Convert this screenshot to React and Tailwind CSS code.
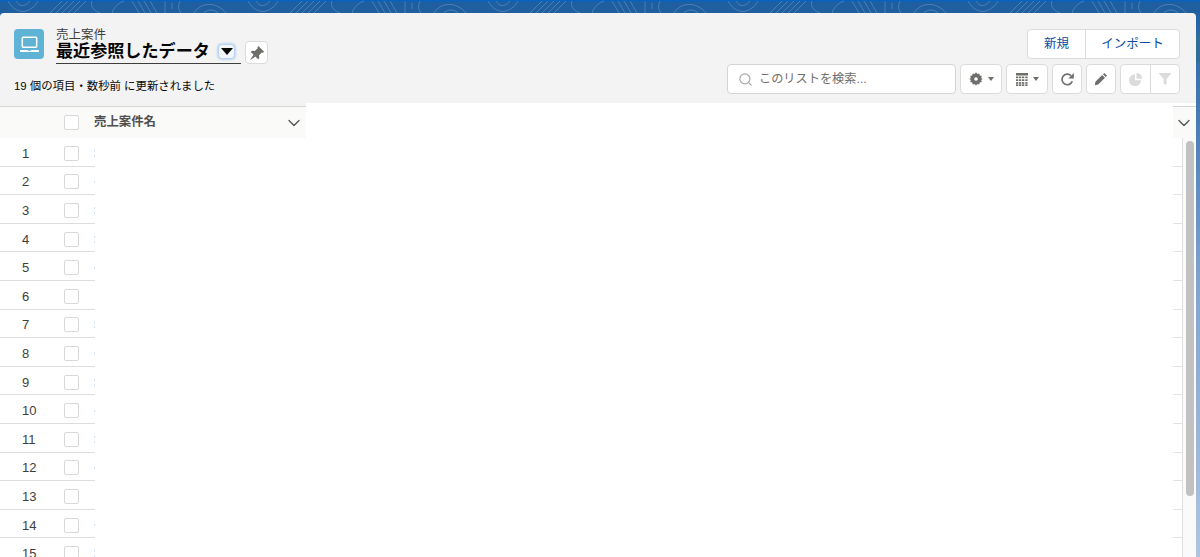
import React from "react";
import { Search, ChevronDown } from "lucide-react";

const font = '"Liberation Sans","Noto Sans CJK JP",sans-serif';
const marks = ["a","b","a","a","b","","a","b","a","b","a","b","","b","a"];

function Topo() {
  const motifs = [];
  for (let i = -1; i < 6; i++) {
    const o = i * 240;
    motifs.push(
      <g key={i} transform={`translate(${o} 0)`} fill="none" stroke="#ffffff" strokeOpacity="0.2" strokeWidth="1">
        <path d="M8 1C12 9 20 13 26 11C32 9 36 5 38 1" />
        <path d="M16 1C19 6 24 8 30 1" />
        <path d="M50 13L62 1M56 13L68 1M62 13L74 1M68 13L80 1M74 13L86 1" />
        <path d="M92 1C90 6 94 11 100 13M112 13C114 7 118 3 124 1" />
        <path d="M132 1L139 13M138 1L145 13M144 1L151 13M150 1L157 13" />
        <path d="M165 1V13M172 3V9M180 1C178 6 178 9 181 13" />
        <path d="M194 13C198 6 206 3 214 5C220 7 224 10 226 13" />
        <path d="M204 13C208 9 214 9 218 13" />
      </g>
    );
  }
  return (
    <svg width="1200" height="13" className="block" aria-hidden="true">
      {motifs}
    </svg>
  );
}

function Laptop() {
  return (
    <svg width="22" height="22" viewBox="0 0 22 22" fill="none" aria-hidden="true">
      <rect x="4.300" y="4.300" width="14.400" height="10" rx="1" stroke="#fff" strokeWidth="1.500" />
      <path d="M2 17h7.500l.6.700h2.800l.6-.7H21v1.200a.8.8 0 0 1-.8.8H2.800a.8.8 0 0 1-.8-.8z" fill="#fff" />
    </svg>
  );
}

function Pin() {
  return (
    <svg width="16" height="16" viewBox="0 0 14 14" fill="#706e6b" aria-hidden="true">
      <path d="M8.200.8l5 5-1 .9-.9-.2-2.500 2.500.2 2.500-1 1L1.600 6.100l1-1 2.500.2 2.500-2.500-.2-.9z" />
      <path d="M4 8.300l1.700 1.700L.8 13.400z" />
    </svg>
  );
}

function Gear() {
  return (
    <svg width="14" height="14" viewBox="0 0 14 14" aria-hidden="true">
      <path fillRule="evenodd" fill="#706e6b" d="M7 .3l1.300 1.700 2-.5.5 2 2 .6-.6 1.900L13.700 7l-1.500 1 .6 1.900-2 .6-.5 2-2-.5L7 13.700 5.700 12l-2 .5-.5-2-2-.6.6-1.900L.3 7l1.500-1-.6-1.900 2-.6.5-2 2 .5zM7 5.200a1.800 1.800 0 1 0 0 3.600 1.800 1.800 0 0 0 0-3.600z" />
    </svg>
  );
}

function TableIcon() {
  return (
    <svg width="12" height="13" viewBox="0 0 12 13" fill="#706e6b" aria-hidden="true">
      <rect x="0" y="0" width="12" height="2.500" />
      {[3.5, 6.3, 9.1, 11.3].map((y) =>
        [0, 3, 6, 9.3].map((x) => <rect key={`${x}-${y}`} x={x} y={y} width="2.300" height="1.700" />)
      )}
    </svg>
  );
}

function Refresh() {
  return (
    <svg width="15" height="15" viewBox="0 0 15 15" fill="none" aria-hidden="true">
      <path d="M12.300 9.300A5.300 5.300 0 1 1 11 3.600" stroke="#706e6b" strokeWidth="1.700" />
      <path d="M13.800 1v5.500H8.300z" fill="#706e6b" />
    </svg>
  );
}

function Pencil() {
  return (
    <svg width="14" height="14" viewBox="0 0 14 14" fill="#706e6b" aria-hidden="true">
      <path d="M10.300.9l2.800 2.800-1.400 1.400L8.900 2.300zM8.200 3l2.800 2.800-6.800 6.800-3.400.7.600-3.500z" />
    </svg>
  );
}

function PieIcon() {
  return (
    <svg width="14" height="14" viewBox="0 0 14 14" fill="#dddbda" aria-hidden="true">
      <path d="M6 2.200v6h6A6 6 0 1 1 6 2.200z" />
      <path d="M7.500.8a5.800 5.800 0 0 1 5.700 5.900H7.500z" />
    </svg>
  );
}

function Funnel() {
  return (
    <svg width="14" height="14" viewBox="0 0 14 14" fill="#dddbda" aria-hidden="true">
      <path d="M.5 1h13L8.500 7v6l-3-1.500V7z" />
    </svg>
  );
}

function Caret({ color = "#706e6b" }) {
  return <span className="ml-[5px] block h-0 w-0 border-x-[3.5px] border-t-[4px] border-x-transparent" style={{ borderTopColor: color }} />;
}

function Box() {
  return <span className="block h-[15px] w-[15px] rounded-[2px] border border-[#d8d8d8] bg-white" />;
}

function Tool({ w, children }) {
  return (
    <div className={`flex h-[30px] ${w} items-center justify-center rounded-[4px] border border-[#dddbda] bg-white`}>
      {children}
    </div>
  );
}

export default function App() {
  return (
    <div
      className="flex h-[557px] w-[1200px] flex-col overflow-hidden bg-gradient-to-b from-[#1b5fa3] via-[#7fa3cf] to-[#b0c4e0]"
      style={{ fontFamily: font }}
    >
      <div className="h-[13px] shrink-0 border-t-2 border-[#0b62b8] bg-[#1f5f9f]">
        <div className="-mt-[2px]"><Topo /></div>
      </div>
      <div className="flex min-h-0 flex-1">
        <div className="flex w-[1196px] min-h-0 flex-col overflow-hidden rounded-t-[4px] bg-[#f3f3f3]">
          {/* page header */}
          <div className="flex h-[90px] shrink-0 justify-between pl-[14px] pr-[16px] pt-[16px]">
            <div>
              <div className="flex h-[35px]">
                <div className="flex h-[30px] w-[30px] items-center justify-center rounded-[4px] bg-[#5fb4d6]">
                  <Laptop />
                </div>
                <div className="ml-[12px]">
                  <div className="h-[11px] pt-[1px] text-[12.5px] leading-[11px] text-[#3e3e3c]">売上案件</div>
                  <div className="flex items-start">
                    <div className="flex h-[24px] w-[185px] items-center border-b border-[#3e3e3c]">
                      <span className="w-[162px] text-[17.1px] font-bold leading-[22px] text-[#080707]">最近参照したデータ</span>
                      <span className="flex h-[15px] w-[17px] items-center justify-center rounded-[4px] border border-[#b9d4f3] bg-[#f3f6fa] shadow-[0_0_3px_#8ab8ee]">
                        <span className="block h-0 w-0 border-x-[6px] border-t-[7px] border-x-transparent border-t-[#080707]" />
                      </span>
                    </div>
                    <div className="ml-[4px] mt-[1px] flex h-[23px] w-[23px] items-center justify-center rounded-[4px] border border-[#dddbda] bg-white">
                      <Pin />
                    </div>
                  </div>
                </div>
              </div>
              <div className="mt-[14px] text-[11.4px] leading-[16px] text-[#080707]">19 個の項目・数秒前 に更新されました</div>
            </div>
            <div className="flex flex-col items-end">
              <div className="flex h-[30px] w-[153px] rounded-[4px] border border-[#dddbda] bg-white text-[12.5px] text-[#0b4a9e]">
                <div className="flex w-[58px] items-center justify-center border-r border-[#dddbda]">新規</div>
                <div className="flex flex-1 items-center justify-center">インポート</div>
              </div>
              <div className="mt-[5px] flex gap-[4px]">
                <div className="flex h-[30px] w-[229px] items-center rounded-[4px] border border-[#d4d4d4] bg-white pl-[10px]">
                  <Search size={15} color="#a8a8a8" strokeWidth={2} />
                  <span className="ml-[6px] text-[12.2px] text-[#706e6b]">このリストを検索...</span>
                </div>
                <Tool w="w-[42px]"><Gear /><Caret /></Tool>
                <Tool w="w-[42px]"><TableIcon /><Caret /></Tool>
                <Tool w="w-[30px]"><Refresh /></Tool>
                <Tool w="w-[30px]"><Pencil /></Tool>
                <div className="flex h-[30px] w-[60px] rounded-[4px] border border-[#dddbda] bg-white">
                  <div className="flex w-[30px] items-center justify-center border-r border-[#dddbda]"><PieIcon /></div>
                  <div className="flex flex-1 items-center justify-center"><Funnel /></div>
                </div>
              </div>
            </div>
          </div>

          {/* table */}
          <div className="flex min-h-0 flex-1">
            <div className="flex w-[306px] shrink-0 flex-col pt-[3px]">
              <div className="flex h-[32px] shrink-0 items-center border-t border-[#d6d6d6] bg-[#fafaf9]">
                <div className="flex w-[94px] justify-end pr-[15px]"><Box /></div>
                <span className="flex-1 text-[12.4px] font-bold text-[#514f4d]">売上案件名</span>
                <ChevronDown size={20} color="#555" strokeWidth={1.6} className="mr-[2px]" />
              </div>
              <div className="flex min-h-0 flex-1">
                <div className="w-[95px] shrink-0">
                  {marks.map((m, i) => (
                    <div key={i} className="flex h-[28.6px] items-center border-b border-[#dddddd] bg-white pt-[3px]">
                      <span className="ml-[22px] w-[42px] text-[13px] leading-none text-[#3e3e3c]">{i + 1}</span>
                      <Box />
                      <span className="ml-[15px] flex w-[1px] flex-col gap-[3px]">
                        {m && <span className="block h-[2px] w-[1px] bg-[#cfe0f7]" />}
                        {m === "a" && <span className="block h-[2px] w-[1px] bg-[#cfe0f7]" />}
                      </span>
                    </div>
                  ))}
                </div>
                <div className="flex-1 bg-white" />
              </div>
            </div>
            <div className="flex-1 bg-white" />
            <div className="flex w-[23px] shrink-0 flex-col bg-white pt-[3px]">
              <div className="flex h-[32px] shrink-0 items-center justify-end border-t border-[#d6d6d6] bg-[#fafaf9] pr-[2px]">
                <ChevronDown size={20} color="#555" strokeWidth={1.6} />
              </div>
              <div className="flex min-h-0 flex-1">
                <div className="w-[9px] shrink-0">
                  {marks.map((_, i) => (
                    <div key={i} className="h-[28.6px] border-b border-[#e2e2e2]" />
                  ))}
                </div>
                <div className="flex-1 border-l border-[#e0e0e0] bg-[#fafafa] pl-[3px] pt-[3px]">
                  <div className="h-[355px] w-[8px] rounded-[4px] bg-[#c1c1c1]" />
                </div>
              </div>
            </div>
          </div>
        </div>
        <div className="flex-1 pt-[20px]">
          <div className="h-[30px] w-full bg-[#2f6d9a]" />
        </div>
      </div>
    </div>
  );
}
